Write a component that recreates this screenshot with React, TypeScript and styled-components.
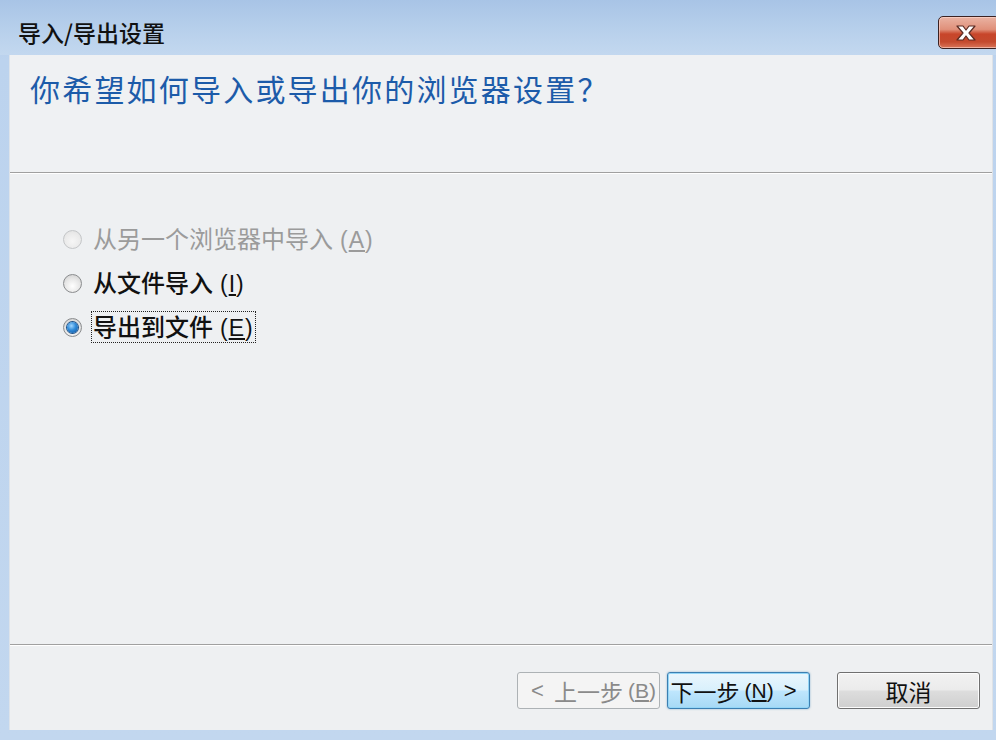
import React from "react";
import styled, { createGlobalStyle, css } from "styled-components";

const Global = createGlobalStyle`
  html, body { margin: 0; padding: 0; }
  body {
    width: 996px; height: 740px; overflow: hidden;
    font-family: "Noto Sans CJK SC", "Noto Sans", "Liberation Sans", sans-serif;
  }
`;

const Window = styled.div`
  width: 996px;
  height: 740px;
  display: flex;
  flex-direction: column;
  background: linear-gradient(180deg, #a9c6e7 0%, #bcd3ee 8%, #c2d7ef 100%);
  overflow: hidden;
`;

const TitleBar = styled.div`
  height: 55px;
  flex: none;
  display: flex;
  align-items: center;
  justify-content: space-between;
  padding-left: 18px;
  background: linear-gradient(180deg, #a8c4e6 0%, #b6cfeb 50%, #c3d8ef 100%);
`;

const TitleText = styled.div`
  font-size: 23px;
  font-weight: 500;
  color: #111;
  margin-top: 9px;
`;

const CloseButton = styled.div`
  width: 62px;
  height: 33px;
  margin-top: 10px;
  margin-right: -4px;
  border: 1px solid #3b2222;
  border-radius: 5px;
  box-sizing: border-box;
  background: linear-gradient(180deg, #eab3a3 0%, #e0907a 40%, #c8452a 55%, #c44a2e 80%, #d9765a 100%);
  box-shadow: inset 0 0 0 1px rgba(255, 220, 210, 0.6);
  display: flex;
  align-items: center;
  justify-content: center;
  padding-right: 6px;
`;

const Frame = styled.div`
  flex: 1;
  display: flex;
  padding: 0 0 10px 9px;
  min-height: 0;
`;

const Panel = styled.div`
  flex: 1;
  display: flex;
  flex-direction: column;
  background: #eef0f2;
  border-right: 1px solid #dfe2e6;
  margin-right: 3px;
  border-left: 1px solid #dde3ea;
`;

const Header = styled.div`
  height: 117px;
  flex: none;
  padding: 12px 0 0 20px;
  box-sizing: border-box;
  background: #eff1f3;
`;

const Heading = styled.h1`
  margin: 0;
  font-weight: 400;
  font-size: 30px;
  line-height: 42px;
  color: #1c5ba9;
  letter-spacing: 2.2px;
`;

const Separator = styled.div`
  height: 1px;
  flex: none;
  background: #a0a0a0;
  border-bottom: 1px solid #ffffff;
`;

const Options = styled.div`
  display: flex;
  flex-direction: column;
  padding: 43px 0 0 53px;
`;

const OptionRow = styled.label<{ $disabled?: boolean }>`
  height: 44px;
  display: flex;
  align-items: center;
  gap: 9px;
  font-size: 24px;
  font-weight: ${(p) => (p.$disabled ? 400 : 500)};
  color: ${(p) => (p.$disabled ? "#9b9b9b" : "#111")};
`;

const RadioCircle = styled.span<{ $checked?: boolean; $disabled?: boolean }>`
  width: 19px;
  height: 19px;
  flex: none;
  border-radius: 50%;
  box-sizing: border-box;
  border: 1px solid ${(p) => (p.$disabled ? "#c4c6c8" : "#8a8c8e")};
  background: ${(p) =>
    p.$disabled
      ? "radial-gradient(circle at 50% 60%, #f6f6f6 0%, #eaeaea 60%, #dcdcdc 100%)"
      : "radial-gradient(circle at 50% 65%, #ffffff 0%, #e8e8e8 50%, #c9c9c9 100%)"};
  display: flex;
  align-items: center;
  justify-content: center;
  ${(p) =>
    p.$checked &&
    css`
      &::after {
        content: "";
        width: 11px;
        height: 11px;
        border-radius: 50%;
        background: radial-gradient(circle at 40% 35%, #9fd6ff 0%, #2f8ad8 45%, #0d4f9a 100%);
        box-shadow: 0 0 0 1px #1c4f86;
      }
    `}
`;

const OptionText = styled.span<{ $focused?: boolean }>`
  line-height: 28px;
  padding: 0 1px;
  border: 1px dotted ${(p) => (p.$focused ? "#222" : "transparent")};
`;

const Paren = styled.span`
  font-family: "Liberation Sans", sans-serif;
  font-size: 23px;
  margin-left: 7px;
  letter-spacing: 1px;
`;

const Spacer = styled.div`
  flex: 1;
`;

const Footer = styled.div`
  height: 84px;
  flex: none;
  display: flex;
  align-items: flex-start;
  justify-content: flex-end;
  padding: 26px 12px 0 0;
  box-sizing: border-box;
`;

const ButtonGroup = styled.div`
  display: flex;
  gap: 7px;
  margin-right: 27px;
`;

type Variant = "normal" | "disabled" | "default";

const Button = styled.button<{ $variant: Variant }>`
  width: 143px;
  height: 37px;
  box-sizing: border-box;
  border-radius: 3px;
  font-family: "Noto Sans CJK SC", "Noto Sans", sans-serif;
  font-size: 23px;
  display: flex;
  align-items: center;
  justify-content: center;
  padding: 0;
  white-space: nowrap;
  ${(p) =>
    p.$variant === "disabled"
      ? css`
          border: 1px solid #adb2b5;
          background: #f4f4f4;
          color: #8a8a8a;
        `
      : p.$variant === "default"
      ? css`
          border: 1px solid #3c7fb1;
          background: linear-gradient(180deg, #eaf6fd 0%, #d9f0fc 48%, #bee6fd 52%, #a7d9f5 100%);
          box-shadow: inset 0 0 0 1px #94d6f7, 0 0 2px rgba(60, 127, 177, 0.6);
          color: #111;
        `
      : css`
          border: 1px solid #707070;
          background: linear-gradient(180deg, #f2f2f2 0%, #ebebeb 48%, #dddddd 52%, #cfcfcf 100%);
          box-shadow: inset 0 0 0 1px #fcfcfc;
          color: #111;
        `}
`;

const Arrow = styled.span`
  font-family: "Liberation Sans", sans-serif;
  font-size: 22px;
  margin: 0 10px;
`;

const Key = styled.span`
  font-family: "Liberation Sans", sans-serif;
  font-size: 21px;
  margin-left: 5px;
`;

const CloseGlyph = () => (
  <svg width="26" height="18" viewBox="0 0 26 18">
    <path
      d="M4 2 L10 2 L13 6 L16 2 L22 2 L16 9 L22 16 L16 16 L13 12 L10 16 L4 16 L10 9 Z"
      fill="#ffffff"
      stroke="#5a2a22"
      strokeWidth="1.2"
      strokeLinejoin="round"
    />
  </svg>
);

export default function App() {
  return (
    <>
      <Global />
      <Window>
        <TitleBar>
          <TitleText>导入/导出设置</TitleText>
          <CloseButton>
            <CloseGlyph />
          </CloseButton>
        </TitleBar>
        <Frame>
          <Panel>
            <Header>
              <Heading>你希望如何导入或导出你的浏览器设置？</Heading>
            </Header>
            <Separator />
            <Options>
              <OptionRow $disabled>
                <RadioCircle $disabled />
                <OptionText>
                  从另一个浏览器中导入<Paren>(<u>A</u>)</Paren>
                </OptionText>
              </OptionRow>
              <OptionRow>
                <RadioCircle />
                <OptionText>
                  从文件导入<Paren>(<u>I</u>)</Paren>
                </OptionText>
              </OptionRow>
              <OptionRow>
                <RadioCircle $checked />
                <OptionText $focused>
                  导出到文件<Paren>(<u>E</u>)</Paren>
                </OptionText>
              </OptionRow>
            </Options>
            <Spacer />
            <Separator />
            <Footer>
              <ButtonGroup>
                <Button $variant="disabled">
                  <Arrow>&lt;</Arrow>上一步<Key>(<u>B</u>)</Key>
                </Button>
                <Button $variant="default">
                  下一步<Key>(<u>N</u>)</Key>
                  <Arrow>&gt;</Arrow>
                </Button>
              </ButtonGroup>
              <Button $variant="normal">取消</Button>
            </Footer>
          </Panel>
        </Frame>
      </Window>
    </>
  );
}
